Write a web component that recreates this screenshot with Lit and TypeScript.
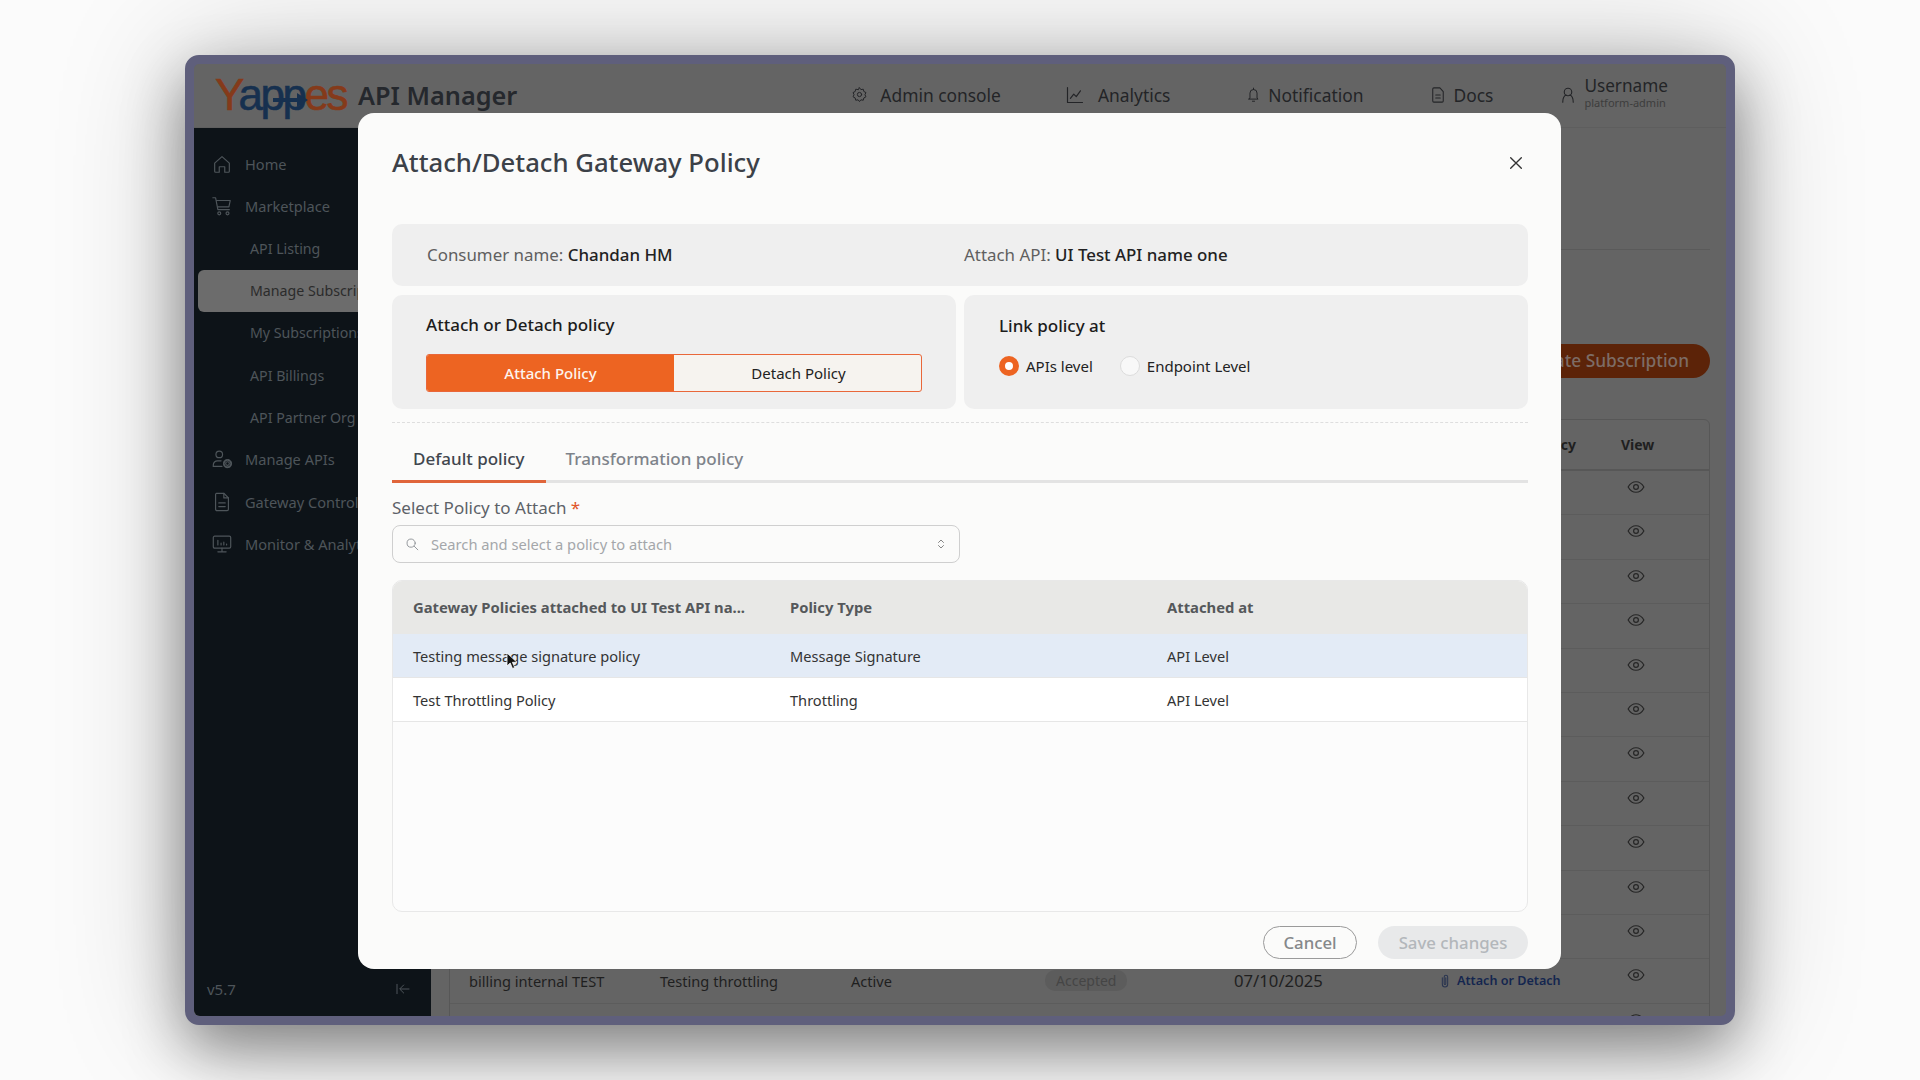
import { LitElement, html, css, svg } from 'lit';
import { customElement } from 'lit/decorators.js';

const icons: Record<string, unknown> = {
  home: svg`<path d="M4 11l8-7 8 7v9a1 1 0 0 1-1 1h-4v-6H9v6H5a1 1 0 0 1-1-1z"/>`,
  cart: svg`<path d="M2 3h3l2.5 13H20"/><path d="M6 6h15l-1.5 7H7.4"/><circle cx="9" cy="20" r="1.6"/><circle cx="18" cy="20" r="1.6"/>`,
  userGear: svg`<circle cx="9" cy="7" r="3.6"/><path d="M2.5 20v-1.5A4.5 4.5 0 0 1 7 14h4"/><path d="M2.5 20H12"/><circle cx="18" cy="17" r="2"/><circle cx="18" cy="17" r="4" stroke-dasharray="2 1.2" stroke-width="2"/>`,
  file: svg`<path d="M6 2.5h8l5 5V20a1.5 1.5 0 0 1-1.5 1.5h-11A1.5 1.5 0 0 1 5 20V4a1.5 1.5 0 0 1 1-1.5z"/><path d="M14 2.5v5h5"/><path d="M8.5 13h7M8.5 17h7"/>`,
  monitor: svg`<rect x="2.5" y="3.5" width="19" height="13" rx="1.5"/><path d="M12 16.5v4M7.5 20.5h9"/><path d="M7.5 8v5M11 11v2M14 10v3M17 12v1"/>`,
  gear: svg`<circle cx="12" cy="12" r="3"/><path d="M12 2.5l2 2.6 3.3-.6.8 3.2 3 1.6-1.4 3 1.4 2.9-3 1.7-.8 3.2-3.3-.6-2 2.5-2-2.5-3.3.6-.8-3.2-3-1.7 1.4-2.9-1.4-3 3-1.6.8-3.2 3.3.6z"/>`,
  chart: svg`<path d="M3 3v18h18"/><path d="M6.5 16l4-5 3 3 5-7"/>`,
  bell: svg`<path d="M7 17V10a5 5 0 0 1 10 0v7l1.5 1.5h-13z"/><path d="M10.5 21.5h3M12 3v2"/>`,
  doc: svg`<path d="M6.5 2.5h8l4.5 5V20a1.5 1.5 0 0 1-1.5 1.5h-11A1.5 1.5 0 0 1 5 20V4a1.5 1.5 0 0 1 1.5-1.5z"/><path d="M9 12h6M9 16h6"/>`,
  user: svg`<circle cx="12" cy="8" r="5"/><path d="M5 21.5c0-5 2-8.5 4.5-9.5M19 21.5c0-5-2-8.5-4.5-9.5"/>`,
  eye: svg`<path d="M1.5 12S5.5 5 12 5s10.5 7 10.5 7-4 7-10.5 7S1.5 12 1.5 12z"/><circle cx="12" cy="12" r="3.2"/>`,
  clip: svg`<path d="M8 7v10a4 4 0 0 0 8 0V6a2.6 2.6 0 0 0-5.2 0v10a1.2 1.2 0 0 0 2.4 0V7"/>`,
  collapse: svg`<path d="M3 5v14M21 12H8M13 6l-6 6 6 6"/>`,
  search: svg`<circle cx="10.5" cy="10.5" r="7"/><path d="M16 16l6 6"/>`,
  updown: svg`<path d="M7 9l5-5 5 5M7 15l5 5 5-5"/>`,
  close: svg`<path d="M4 4l16 16M20 4L4 20"/>`,
};

const icon = (name: string, size: number, width = 1.6) => html`<svg class="icon" width=${size} height=${size} viewBox="0 0 24 24" fill="none" stroke="currentColor" stroke-width=${width} stroke-linecap="round" stroke-linejoin="round">${icons[name]}</svg>`;

const menu = [
  { label: 'Home', icon: 'home' },
  { label: 'Marketplace', icon: 'cart' },
  { label: 'API Listing', sub: true },
  { label: 'Manage Subscriptions', sub: true, active: true },
  { label: 'My Subscriptions', sub: true },
  { label: 'API Billings', sub: true },
  { label: 'API Partner Org', sub: true },
  { label: 'Manage APIs', icon: 'userGear' },
  { label: 'Gateway Controls', icon: 'file' },
  { label: 'Monitor & Analytics', icon: 'monitor' },
];

const nav = [
  { label: 'Admin console', icon: 'gear', size: 17, gap: 0, inner: 12 },
  { label: 'Analytics', icon: 'chart', size: 20, gap: 64, inner: 13 },
  { label: 'Notification', icon: 'bell', size: 17, gap: 75, inner: 6 },
  { label: 'Docs', icon: 'doc', size: 18, gap: 66, inner: 6 },
];

const policies = [
  { name: 'Testing message signature policy', type: 'Message Signature', level: 'API Level' },
  { name: 'Test Throttling Policy', type: 'Throttling', level: 'API Level' },
];

@customElement('app-root')
export class AppRoot extends LitElement {
  static styles = css`
    :host {
      display: block;
      width: 1920px;
      height: 1080px;
      box-sizing: border-box;
      padding: 55px 185px;
      overflow: hidden;
      background: #fbfbfb;
      font-family: "Noto Sans", "Open Sans", sans-serif;
    }

    .icon { display: block; flex: none; }

    .frame {
      position: relative;
      box-sizing: border-box;
      height: 970px;
      border: 9px solid #5f5f7c;
      border-radius: 14px;
      background: #646464;
      box-shadow: 0 24px 60px rgba(0, 0, 0, 0.42), 0 0 130px rgba(0, 0, 0, 0.22);
    }

    .screen {
      display: flex;
      flex-direction: column;
      height: 100%;
      overflow: hidden;
      border-radius: 6px;
    }

    .topbar {
      display: flex;
      align-items: center;
      flex: none;
      height: 64px;
      box-sizing: border-box;
      padding: 0 58px 2px 21px;
      border-bottom: 1px solid #5e5e5e;
      color: #232427;
    }

    .logo {
      position: relative;
      width: 143px;
      font-family: "Liberation Sans", sans-serif;
      font-size: 44px;
      line-height: 50px;
      letter-spacing: -2.5px;
      color: #853a1a;
      -webkit-text-stroke: 0.6px currentColor;
    }

    .logo b { font-weight: 400; color: #16304f; }

    .logo svg { position: absolute; left: 58px; top: 23px; }

    .product { font-size: 25.3px; font-weight: 600; color: #25282d; }

    .nav { display: flex; align-items: center; margin-left: auto; }

    .nav-item { display: flex; align-items: center; font-size: 17.4px; }

    .user { display: flex; align-items: center; gap: 7px; margin-left: 66px; }

    .user-text { margin-bottom: 4px; }

    .user-name { font-size: 17.2px; line-height: 21px; }

    .user-role { font-size: 11px; line-height: 14px; color: #3d3d3d; }

    .body { display: flex; flex: 1; min-height: 0; }

    .sidebar {
      display: flex;
      flex-direction: column;
      flex: none;
      width: 237px;
      box-sizing: border-box;
      padding: 15px 0 0 4px;
      background: #0d1318;
      color: #4e555a;
      font-size: 14.6px;
    }

    .menu-item {
      display: flex;
      align-items: center;
      gap: 12px;
      height: 42.2px;
      padding-left: 13px;
      border-radius: 6px;
      white-space: nowrap;
    }

    .menu-item.sub { padding-left: 52px; font-size: 14.2px; }

    .menu-item.active { background: #6c6c6c; color: #2b2b2b; }

    .sidebar-foot {
      display: flex;
      align-items: center;
      justify-content: space-between;
      margin-top: auto;
      padding: 0 20px 17px 9px;
      font-size: 15px;
    }

    .main {
      flex: 1;
      min-width: 0;
      padding: 121px 16px 0 18px;
      color: #1f1f1f;
    }

    .rule { border-top: 1px solid #5a5a5a; }

    .toolbar { display: flex; justify-content: flex-end; margin-top: 94px; }

    .create {
      width: 400px;
      height: 34px;
      padding-right: 21px;
      box-sizing: border-box;
      border-radius: 17px;
      background: #5c2308;
      color: #7d6c65;
      font-size: 17.3px;
      font-weight: 500;
      line-height: 34px;
      text-align: right;
    }

    .grid-table { margin-top: 41px; border: 1px solid #575757; border-radius: 6px 6px 0 0; }

    .grid-row {
      display: grid;
      grid-template-columns: 191px 191px 191px 191px 207px 180px 1fr;
      height: 44.4px;
      box-sizing: border-box;
      align-items: center;
      border-bottom: 1px solid #5c5c5c;
      font-size: 14.6px;
      white-space: nowrap;
    }

    .grid-row > div { padding-left: 19px; }

    .grid-head {
      height: 51px;
      border-bottom: 2px solid #575757;
      font-size: 14px;
      font-weight: 700;
    }

    .grid-row > .end { padding: 0 25px 0 0; text-align: right; }

    .grid-row > .view { padding-left: 20px; }

    .grid-row > .date { font-size: 16.7px; padding-left: 20px; }

    .chip {
      display: inline-block;
      margin-left: 3px;
      padding: 0 11px;
      border-radius: 10px;
      background: #5c5c5c;
      color: #454545;
      font-size: 14px;
      line-height: 21px;
    }

    .link {
      display: flex;
      align-items: center;
      gap: 4px;
      margin-left: -3px;
      color: #14264f;
      font-size: 12.6px;
      font-weight: 600;
    }

    .link .icon { color: #2a3550; }

    .grid-row > .eye { align-self: start; padding: 7px 0 0 26px; color: #262626; }

    /* dialog */
    .modal {
      position: absolute;
      left: 164px;
      top: 49px;
      width: 1203px;
      height: 856px;
      box-sizing: border-box;
      padding: 33px 33px 0 34px;
      border-radius: 16px;
      background: #fbfbfa;
      color: #222;
    }

    .modal-head { display: flex; align-items: center; justify-content: space-between; height: 32px; padding-right: 4px; }

    .modal-title { font-size: 25.7px; font-weight: 500; color: #3c4148; }

    .close { margin-top: 1px; color: #333; }

    .info {
      display: grid;
      grid-template-columns: 537px 1fr;
      align-items: center;
      height: 62px;
      margin-top: 46px;
      padding: 0 0 2px 35px;
      box-sizing: border-box;
      border-radius: 10px;
      background: #efefef;
      font-size: 16.9px;
      color: #5f5f5f;
    }

    .info strong { font-weight: 500; color: #222; }

    .panels { display: grid; grid-template-columns: 564px 1fr; gap: 8px; margin-top: 9px; }

    .panel { height: 114px; box-sizing: border-box; padding: 20px 34px; border-radius: 10px; background: #efefef; }

    .panel + .panel { padding: 21px 35px; }

    .panel-title { font-size: 17px; font-weight: 500; line-height: 20px; color: #1c1c1c; }

    .toggle {
      display: grid;
      grid-template-columns: 247px 249px;
      height: 38px;
      margin-top: 19px;
      box-sizing: border-box;
      overflow: hidden;
      border: 1px solid #e9673a;
      border-radius: 3px;
      background: #f6f3ef;
      font-size: 15px;
      line-height: 36px;
      text-align: center;
    }

    .toggle .on { background: #ed6422; color: #fdf4ee; font-weight: 500; }

    .radios { display: flex; align-items: center; margin-top: 20px; font-size: 15px; line-height: 20px; }

    .radio {
      width: 20px;
      height: 20px;
      margin-right: 7px;
      box-sizing: border-box;
      border: 1px solid #dcdcdc;
      border-radius: 50%;
      background: #f8f8f8;
    }

    .radio.on { border: 6px solid #ed6422; background: #fff; }

    .radio-label { margin-right: 27px; }

    .divider { margin-top: 13px; border-top: 1px dashed #dedede; }

    .tabs { display: flex; height: 60px; box-sizing: border-box; border-bottom: 3px solid #e3e3e3; }

    .tab {
      height: 60px;
      box-sizing: border-box;
      padding: 24px 20px 0;
      font-size: 17px;
      font-weight: 500;
      line-height: 24px;
      color: #7e838a;
    }

    .tab.active { padding: 24px 21px 0; border-bottom: 3px solid #e0653a; color: #41464e; }

    .field-label { margin-top: 14px; font-size: 17px; line-height: 22px; color: #5d6268; }

    .field-label span { color: #e0562a; }

    .select {
      display: flex;
      align-items: center;
      width: 568px;
      height: 38px;
      margin-top: 6px;
      padding: 0 12px;
      box-sizing: border-box;
      border: 1px solid #cfcfcf;
      border-radius: 8px;
      color: #a4a7aa;
      font-size: 14.7px;
    }

    .select .icon:first-child { margin-right: 12px; color: #8d9196; }

    .select .icon:last-child { margin-left: auto; color: #777; }

    .policies {
      position: relative;
      height: 332px;
      margin-top: 17px;
      box-sizing: border-box;
      overflow: hidden;
      border: 1px solid #e8e8e8;
      border-radius: 10px;
      background: #fcfcfc;
    }

    .policy-row {
      display: grid;
      grid-template-columns: 377px 377px 1fr;
      align-items: center;
      height: 44px;
      box-sizing: border-box;
      border-bottom: 1px solid #e6e6e6;
      font-size: 14.6px;
      color: #333;
    }

    .policy-row > div { padding-left: 20px; white-space: nowrap; }

    .policy-row:nth-child(2) { background: #e3ebf6; }

    .policy-row:nth-child(3) { background: #fff; }

    .policy-row.head {
      height: 53px;
      padding-bottom: 2px;
      border: 0;
      background: #e8e8e6;
      color: #55585b;
      font-size: 14.8px;
      font-weight: 700;
    }

    .cursor { position: absolute; left: 113px; top: 71px; }

    .actions { display: flex; justify-content: flex-end; gap: 21px; margin-top: 14px; }

    .btn {
      height: 33px;
      box-sizing: border-box;
      border-radius: 17px;
      font-size: 16.8px;
      font-weight: 500;
      line-height: 31px;
      text-align: center;
    }

    .btn.cancel { width: 94px; border: 1px solid #9a9a9a; color: #85888a; }

    .btn.save { width: 150px; background: #e8e9ea; color: #b3b7bb; line-height: 33px; }
  `;

  renderRow(row?: { name: string; plan: string; status: string; state: string; date: string }) {
    return html`
      <div class="grid-row">
        <div>${row?.name}</div>
        <div>${row?.plan}</div>
        <div>${row?.status}</div>
        <div>${row ? html`<span class="chip">${row.state}</span>` : ''}</div>
        <div class="date">${row?.date}</div>
        <div>${row ? html`<span class="link">${icon('clip', 16)}Attach or Detach</span>` : ''}</div>
        <div class="eye">${icon('eye', 18)}</div>
      </div>
    `;
  }

  render() {
    const billing = { name: 'billing internal TEST', plan: 'Testing throttling', status: 'Active', state: 'Accepted', date: '07/10/2025' };
    return html`
      <div class="frame">
        <div class="screen">
          <header class="topbar">
            <div class="logo">
              Y<b>app</b>es
              <svg width="38" height="14" viewBox="0 0 38 14"><path d="M0 5h24V0l11 7-11 7V9H0z" fill="#16304f"/></svg>
            </div>
            <div class="product">API Manager</div>
            <nav class="nav">
              ${nav.map(n => html`<div class="nav-item" style="margin-left:${n.gap}px;gap:${n.inner}px">${icon(n.icon, n.size, 1.4)}${n.label}</div>`)}
              <div class="user">
                ${icon('user', 18, 1.5)}
                <div class="user-text">
                  <div class="user-name">Username</div>
                  <div class="user-role">platform-admin</div>
                </div>
              </div>
            </nav>
          </header>
          <div class="body">
            <aside class="sidebar">
              ${menu.map(m => html`
                <div class="menu-item ${m.sub ? 'sub' : ''} ${m.active ? 'active' : ''}">
                  ${m.icon ? icon(m.icon, 22, 1.3) : ''}${m.label}
                </div>
              `)}
              <div class="sidebar-foot">
                <span>v5.7</span>
                ${icon('collapse', 16, 1.5)}
              </div>
            </aside>
            <main class="main">
              <div class="rule"></div>
              <div class="toolbar"><div class="create">Create Subscription</div></div>
              <div class="grid-table">
                <div class="grid-row grid-head">
                  <div></div><div></div><div></div><div></div><div></div>
                  <div class="end">Policy</div>
                  <div class="view">View</div>
                </div>
                ${Array.from({ length: 11 }, () => this.renderRow())}
                ${this.renderRow(billing)}
                ${this.renderRow()}
              </div>
            </main>
          </div>
        </div>

        <section class="modal">
          <div class="modal-head">
            <div class="modal-title">Attach/Detach Gateway Policy</div>
            <div class="close">${icon('close', 16, 2)}</div>
          </div>
          <div class="info">
            <div>Consumer name: <strong>Chandan HM</strong></div>
            <div>Attach API: <strong>UI Test API name one</strong></div>
          </div>
          <div class="panels">
            <div class="panel">
              <div class="panel-title">Attach or Detach policy</div>
              <div class="toggle"><div class="on">Attach Policy</div><div>Detach Policy</div></div>
            </div>
            <div class="panel">
              <div class="panel-title">Link policy at</div>
              <div class="radios">
                <div class="radio on"></div><div class="radio-label">APIs level</div>
                <div class="radio"></div><div>Endpoint Level</div>
              </div>
            </div>
          </div>
          <div class="divider"></div>
          <div class="tabs">
            <div class="tab active">Default policy</div>
            <div class="tab">Transformation policy</div>
          </div>
          <div class="field-label">Select Policy to Attach <span>*</span></div>
          <div class="select">
            ${icon('search', 14, 1.6)}
            Search and select a policy to attach
            ${icon('updown', 12, 1.8)}
          </div>
          <div class="policies">
            <div class="policy-row head">
              <div>Gateway Policies attached to UI Test API na...</div>
              <div>Policy Type</div>
              <div>Attached at</div>
            </div>
            ${policies.map(p => html`
              <div class="policy-row">
                <div>${p.name}</div>
                <div>${p.type}</div>
                <div>${p.level}</div>
              </div>
            `)}
            <svg class="cursor" width="13" height="18" viewBox="0 0 13 18"><path d="M1 1v13l3.2-3 2.3 5.5 2.2-1-2.3-5.2H11z" fill="#111" stroke="#fff" stroke-width="0.8"/></svg>
          </div>
          <div class="actions">
            <div class="btn cancel">Cancel</div>
            <div class="btn save">Save changes</div>
          </div>
        </section>
      </div>
    `;
  }
}
